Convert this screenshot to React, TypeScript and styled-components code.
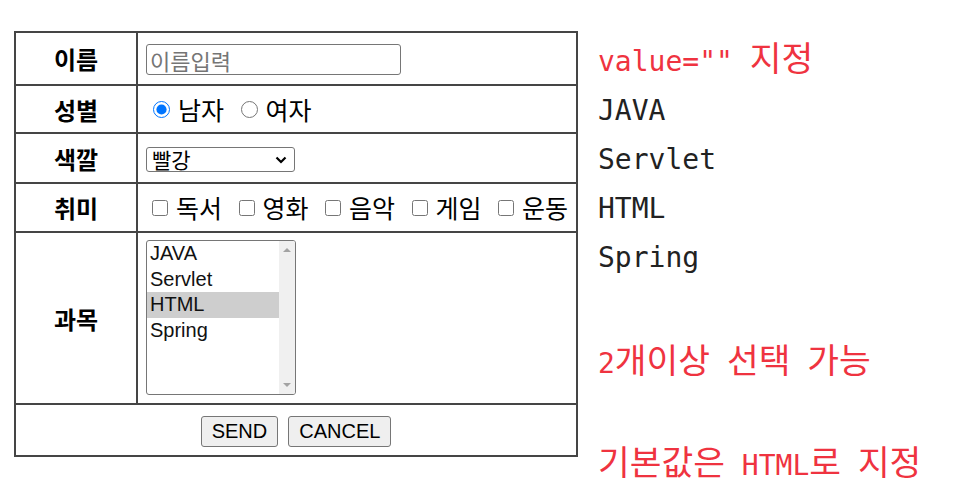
import React from "react";
import styled, { createGlobalStyle } from "styled-components";

const GlobalStyle = createGlobalStyle`
  html, body { margin: 0; padding: 0; background: #ffffff; }
  body { font-family: "Liberation Sans", "Noto Sans CJK KR", sans-serif; color: #000; }
`;

const Page = styled.div`
  display: flex;
  align-items: flex-start;
  gap: 20px;
  padding: 31px 0 0 14px;
`;

const FormGrid = styled.form`
  display: grid;
  grid-template-columns: 120px 438px;
  grid-template-rows: 51px 46px 48px 47px 170px 50px;
  gap: 2px;
  padding: 2px;
  background: #454545;
  margin: 0;
`;

const LabelCell = styled.div`
  background: #fff;
  display: flex;
  align-items: center;
  justify-content: center;
  font-family: "Noto Sans CJK KR", sans-serif;
  font-weight: 700;
  font-size: 24px;
  color: #000;
`;

const FieldCell = styled.div<{ $top?: boolean }>`
  background: #fff;
  display: flex;
  align-items: ${(p) => (p.$top ? "flex-start" : "center")};
  padding: ${(p) => (p.$top ? "7px 0 0 8px" : "0 0 0 8px")};
`;

const ButtonCell = styled.div`
  grid-column: 1 / span 2;
  background: #fff;
  display: flex;
  align-items: center;
  justify-content: center;
  gap: 10px;
  padding-top: 3px;
`;

const TextInput = styled.input`
  box-sizing: border-box;
  width: 255px;
  height: 31px;
  margin: 2px 0 0 0;
  padding: 0 3px;
  border: 1px solid #767676;
  border-radius: 3px;
  font-family: "Noto Sans CJK KR", sans-serif;
  font-size: 22px;
  color: #000;
  outline: none;
  &::placeholder { color: #757575; }
`;

const ChoiceGroup = styled.div<{ $gap: number }>`
  display: flex;
  align-items: center;
  gap: ${(p) => p.$gap}px;
`;

const Choice = styled.label`
  display: inline-flex;
  align-items: center;
  font-family: "Noto Sans CJK KR", sans-serif;
  font-size: 25px;
  line-height: 1;
  color: #000;
`;

const Radio = styled.input`
  width: 17px;
  height: 17px;
  margin: 1px 8px 0 7px;
`;

const Check = styled.input`
  width: 16px;
  height: 16px;
  margin: 1px 8px 0 6px;
`;

const SelectWrap = styled.div`
  position: relative;
  width: 149px;
  height: 25px;
  margin-top: 2px;
`;

const Select = styled.select`
  box-sizing: border-box;
  appearance: none;
  width: 149px;
  height: 25px;
  padding: 0 0 0 5px;
  border: 1px solid #767676;
  border-radius: 3px;
  background: #fff;
  font-family: "Noto Sans CJK KR", sans-serif;
  font-size: 21px;
  line-height: 23px;
  color: #000;
  outline: none;
`;

const Chevron = styled.svg`
  position: absolute;
  right: 8px;
  top: 9px;
  pointer-events: none;
`;

const ListBox = styled.div`
  box-sizing: border-box;
  width: 150px;
  height: 155px;
  border: 1px solid #767676;
  border-radius: 3px;
  display: flex;
  overflow: hidden;
  background: #fff;
`;

const ListItems = styled.div`
  flex: 1;
  display: flex;
  flex-direction: column;
`;

const ListItem = styled.div<{ $selected?: boolean }>`
  height: 25.5px;
  line-height: 25px;
  padding-left: 3px;
  font-family: "Liberation Sans", sans-serif;
  font-size: 20px;
  color: #111;
  background: ${(p) => (p.$selected ? "#cecece" : "transparent")};
`;

const ScrollTrack = styled.div`
  width: 16px;
  background: #f0f0f0;
  display: flex;
  flex-direction: column;
  justify-content: space-between;
  align-items: center;
  padding: 7px 0 7px;
`;

const Arrow = styled.div<{ $down?: boolean }>`
  width: 0;
  height: 0;
  border-left: 4px solid transparent;
  border-right: 4px solid transparent;
  ${(p) =>
    p.$down
      ? "border-top: 4px solid #a3a3a3;"
      : "border-bottom: 4px solid #a3a3a3;"}
`;

const Button = styled.button`
  height: 31px;
  padding: 0 10px;
  border: 1px solid #767676;
  border-radius: 3px;
  background: #efefef;
  font-family: "Liberation Sans", sans-serif;
  font-size: 20px;
  color: #000;
`;

const Notes = styled.div`
  display: flex;
  flex-direction: column;
  padding-top: 6px;
  font-family: "DejaVu Sans Mono", "Noto Sans CJK KR", monospace;
  font-size: 28px;
  line-height: 49px;
`;

const Note = styled.div<{ $red?: boolean; $space?: number }>`
  height: 49px;
  white-space: pre;
  color: ${(p) => (p.$red ? "#ef3340" : "#222")};
  margin-top: ${(p) => p.$space ?? 0}px;
`;

const Ko = styled.span`
  font-family: "Noto Sans CJK KR", sans-serif;
  font-size: 34.5px;
  line-height: 1;
`;

const hobbies = ["독서", "영화", "음악", "게임", "운동"];
const subjects = ["JAVA", "Servlet", "HTML", "Spring"];

export default function App() {
  return (
    <>
      <GlobalStyle />
      <Page>
        <FormGrid onSubmit={(e) => e.preventDefault()}>
          <LabelCell>이름</LabelCell>
          <FieldCell>
            <TextInput type="text" placeholder="이름입력" defaultValue="" />
          </FieldCell>

          <LabelCell>성별</LabelCell>
          <FieldCell>
            <ChoiceGroup $gap={9.5}>
              <Choice>
                <Radio type="radio" name="gender" defaultChecked />
                남자
              </Choice>
              <Choice>
                <Radio type="radio" name="gender" />
                여자
              </Choice>
            </ChoiceGroup>
          </FieldCell>

          <LabelCell>색깔</LabelCell>
          <FieldCell>
            <SelectWrap>
              <Select defaultValue="red">
                <option value="red">빨강</option>
                <option value="blue">파랑</option>
                <option value="green">초록</option>
              </Select>
              <Chevron width="12" height="8" viewBox="0 0 12 8">
                <path d="M1.5 1.5 L6 6 L10.5 1.5" fill="none" stroke="#000" strokeWidth="2.2" />
              </Chevron>
            </SelectWrap>
          </FieldCell>

          <LabelCell>취미</LabelCell>
          <FieldCell>
            <ChoiceGroup $gap={10.5}>
              {hobbies.map((h) => (
                <Choice key={h}>
                  <Check type="checkbox" />
                  {h}
                </Choice>
              ))}
            </ChoiceGroup>
          </FieldCell>

          <LabelCell>과목</LabelCell>
          <FieldCell $top>
            <ListBox>
              <ListItems>
                {subjects.map((s) => (
                  <ListItem key={s} $selected={s === "HTML"}>
                    {s}
                  </ListItem>
                ))}
              </ListItems>
              <ScrollTrack>
                <Arrow />
                <Arrow $down />
              </ScrollTrack>
            </ListBox>
          </FieldCell>

          <ButtonCell>
            <Button type="submit">SEND</Button>
            <Button type="reset">CANCEL</Button>
          </ButtonCell>
        </FormGrid>

        <Notes>
          <Note $red>
            {'value="" '}
            <Ko>지정</Ko>
          </Note>
          <Note>JAVA</Note>
          <Note>Servlet</Note>
          <Note>HTML</Note>
          <Note>Spring</Note>
          <Note $red $space={57}>
            2<Ko>개이상</Ko> <Ko>선택</Ko> <Ko>가능</Ko>
          </Note>
          <Note $red $space={53}>
            <Ko>기본값은</Ko> HTML<Ko>로</Ko> <Ko>지정</Ko>
          </Note>
        </Notes>
      </Page>
    </>
  );
}
